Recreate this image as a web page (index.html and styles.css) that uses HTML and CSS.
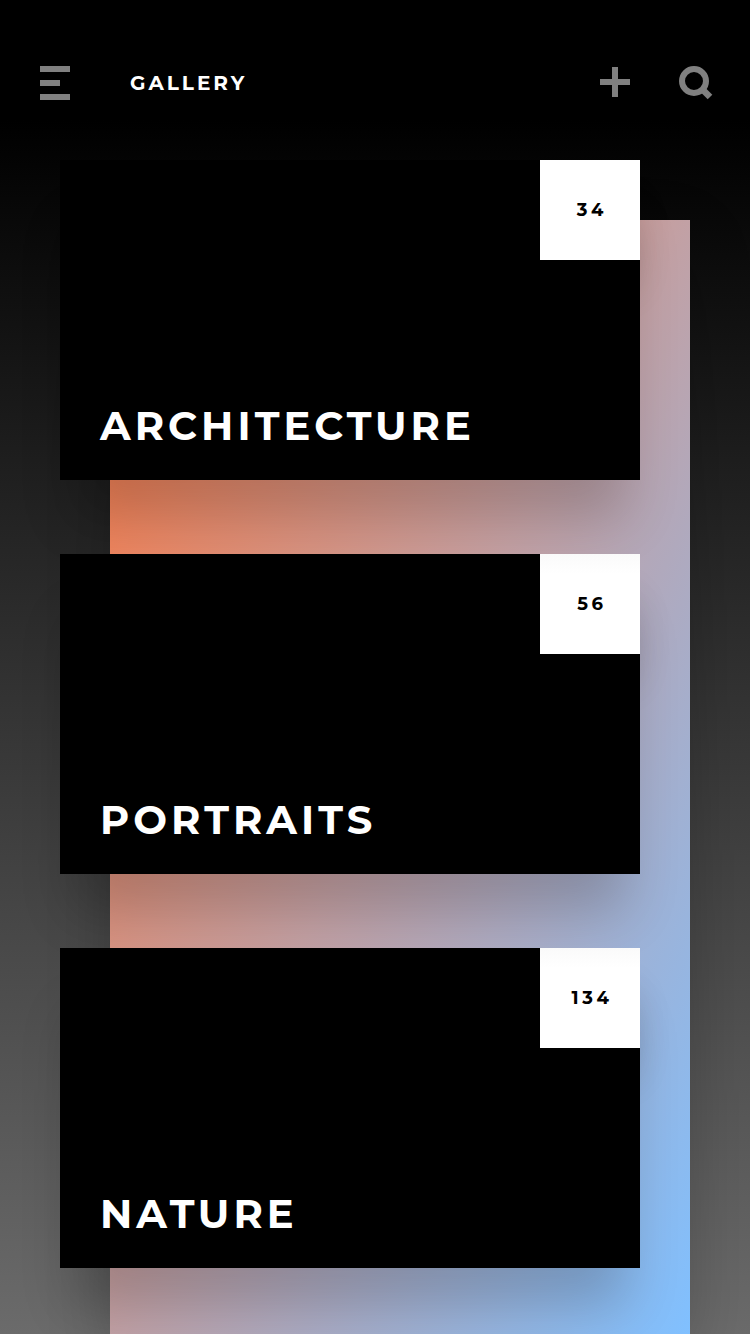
FILE: index.html
```html
<!DOCTYPE html>
<html lang="en">
<head>
<meta charset="utf-8">
<title>Gallery</title>
<link rel="stylesheet" href="styles.css">
</head>
<body>
<div class="screen">
  <header class="topbar">
    <svg class="menu" width="30" height="34" viewBox="0 0 30 34"><path d="M0 0h30v6H0zM0 14h20v6H0zM0 28h30v6H0z"/></svg>
    <h1 class="heading">GALLERY</h1>
    <svg class="plus" width="30" height="30" viewBox="0 0 30 30"><path d="M12 0h6v12h12v6H18v12h-6V18H0v-6h12z"/></svg>
    <svg class="search" width="34" height="34" viewBox="0 0 34 34"><circle cx="15" cy="15" r="12"/><path d="M22.500 22.500l8.500 8.500"/></svg>
  </header>
  <main class="panel">
    <article class="card">
      <span class="count">34</span>
      <h2 class="title">ARCHITECTURE</h2>
    </article>
    <article class="card">
      <span class="count count-faded">56</span>
      <h2 class="title">PORTRAITS</h2>
    </article>
    <article class="card">
      <span class="count count-faded">134</span>
      <h2 class="title">NATURE</h2>
    </article>
  </main>
</div>
</body>
</html>
```

FILE: styles.css
```css
* { box-sizing: border-box; margin: 0; }

body { background: #000; }

.screen {
  width: 750px;
  height: 1334px;
  overflow: hidden;
  display: flex;
  flex-direction: column;
  background: linear-gradient(#000 120px, #6b6b6b 1334px);
  font-family: Montserrat, Inter, sans-serif;
  color: #fff;
}

.topbar {
  height: 220px;
  flex: none;
  display: flex;
  align-items: flex-start;
  padding: 66px 37px 0 40px;
  fill: #808080;
}

.heading {
  flex: 1;
  margin-left: 60px;
  font-size: 20px;
  line-height: 34px;
  font-weight: 700;
  letter-spacing: 3px;
}

.plus { margin: 1px 49px 0 0; }

.search { fill: none; stroke: #808080; stroke-width: 6; overflow: visible; }

.search path { stroke-width: 6.5; }

.panel {
  flex: none;
  width: 580px;
  height: 1114px;
  margin-left: 110px;
  display: flex;
  flex-direction: column;
  gap: 74px;
  background: linear-gradient(to bottom right, #ff7840, #c3a0a3 49%, #80c0ff);
  box-shadow: 0 20px 60px rgba(0, 0, 0, .2);
}

.card {
  flex: none;
  width: 580px;
  height: 320px;
  margin-left: -50px;
  display: flex;
  flex-direction: column;
  justify-content: space-between;
  background: #000;
  box-shadow: 0 52px 50px -14px rgba(0, 0, 0, .19);
}

.card:first-child { margin-top: -60px; }

.count {
  align-self: flex-end;
  width: 100px;
  height: 100px;
  padding-left: 4px;
  background: #fff;
  color: #000;
  font-size: 18px;
  font-weight: 700;
  line-height: 100px;
  letter-spacing: 3.6px;
  text-align: center;
  box-shadow: 0 36px 40px -10px rgba(0, 0, 0, .2);
}

.count-faded { background: linear-gradient(#fafafa, #fff 20px); }

.title {
  padding: 0 0 30px 40px;
  font-size: 40px;
  line-height: 48px;
  font-weight: 700;
  letter-spacing: 4.04px;
  white-space: nowrap;
}
```
